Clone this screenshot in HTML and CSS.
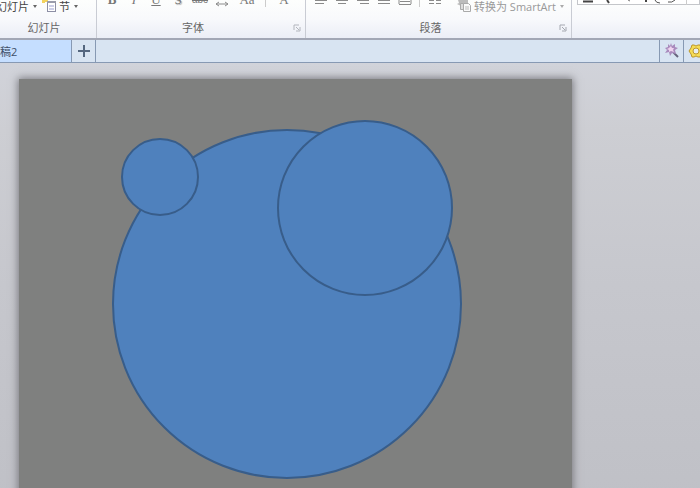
FILE: index.html
```html
<!DOCTYPE html>
<html lang="zh-CN">
<head>
  <meta charset="UTF-8">
  <meta name="viewport" content="width=device-width, initial-scale=1.0">
  <title>演示文稿2</title>
  <link rel="stylesheet" href="styles.css">
</head>
<body>
  <header class="ribbon">
    <section class="group slides">
      <div class="tools">
        <button class="text-tool">幻灯片<span class="caret"></span></button>
        <button class="text-tool">
          <svg width="15" height="14" viewBox="0 0 15 14">
            <path d="M0 0h6v3H3v1H0z" fill="#f3d35e"/>
            <rect x="5.500" y="3.500" width="8" height="9" fill="#fff" stroke="#8d8fa5"/>
            <path d="M5 2h9v2H5z" fill="#9a9cac"/>
            <path d="M7 7h5M7 10h5" stroke="#9b9fd0"/>
          </svg>节<span class="caret"></span>
        </button>
      </div>
      <div class="label">幻灯片</div>
    </section>
    <section class="group font">
      <div class="tools">
        <button class="letter"><b>B</b></button>
        <button class="letter"><i>I</i></button>
        <button class="letter"><u>U</u></button>
        <button class="letter shadow">S</button>
        <button class="letter"><s>abc</s></button>
        <button class="letter" aria-label="字符间距">
          <svg width="14" height="6" viewBox="0 0 14 6"><path d="M1 3h12M4 1L1 3l3 2M10 1l3 2-3 2" fill="none" stroke="#8b8b8b"/></svg>
        </button>
        <button class="letter wide">Aa</button>
        <span class="divider"></span>
        <button class="letter wide">A</button>
      </div>
      <div class="label">字体
        <button class="launcher" aria-label="字体对话框"><svg width="8" height="8" viewBox="0 0 8 8"><path d="M1 6V1h5M3 3l3 3M7 3v4H3" fill="none" stroke="#b3b6bd"/></svg></button>
      </div>
    </section>
    <section class="group paragraph">
      <div class="tools">
        <button class="align" aria-label="左对齐"><svg width="14" height="4"><path d="M1 0.500h12M1 3.500h9" stroke="#8a8a8a"/></svg></button>
        <button class="align" aria-label="居中"><svg width="14" height="4"><path d="M1 0.500h12M3 3.500h8" stroke="#8a8a8a"/></svg></button>
        <button class="align" aria-label="右对齐"><svg width="14" height="4"><path d="M1 0.500h12M4 3.500h9" stroke="#8a8a8a"/></svg></button>
        <button class="align" aria-label="两端对齐"><svg width="14" height="4"><path d="M1 0.500h12M1 3.500h12" stroke="#8a8a8a"/></svg></button>
        <button class="align" aria-label="分散对齐"><svg width="14" height="5"><path d="M1 0v2M13 0v2M2 1.500h10M1 4.500h12M1 2v2M13 2v2" stroke="#8a8a8a"/></svg></button>
        <span class="divider"></span>
        <button class="align" aria-label="分栏"><svg width="14" height="4"><path d="M1 0.500h5M8 0.500h5M1 3.500h5M8 3.500h5" stroke="#8a8a8a"/></svg></button>
        <button class="text-tool smartart" disabled>
          <svg width="15" height="14" viewBox="0 0 15 14">
            <path d="M1 1h10v3H4v3L0 5l2-1z" fill="#bcbcbc"/>
            <path d="M3.500 4.500h6v6h-6z" fill="#ddd" stroke="#aaa"/>
            <path d="M6.500 4.500h5l2 2v6h-7z" fill="#fafafa" stroke="#aaa"/>
            <path d="M8 8h4M8 10h4" stroke="#bbb"/>
          </svg>转换为 SmartArt<span class="caret"></span>
        </button>
      </div>
      <div class="label">段落
        <button class="launcher" aria-label="段落对话框"><svg width="8" height="8" viewBox="0 0 8 8"><path d="M1 6V1h5M3 3l3 3M7 3v4H3" fill="none" stroke="#a5a8b0"/></svg></button>
      </div>
    </section>
    <section class="group drawing">
      <div class="gallery">
        <svg width="100%" height="5">
          <path d="M5 1.500h10" stroke="#444" stroke-width="2"/>
          <path d="M29 0l2 3" stroke="#444" stroke-width="2"/>
          <path d="M50 0l2 1" stroke="#777"/>
          <path d="M68 0v2" stroke="#444" stroke-width="2"/>
          <path d="M77 0q1 3 5 3M90 2q4 1 7-2" fill="none" stroke="#555"/>
          <path d="M108.500 0v5" stroke="#ccc"/>
        </svg>
      </div>
    </section>
  </header>

  <nav class="tabs">
    <a class="tab active" href="#">稿2</a>
    <button class="tab add" aria-label="新建">
      <svg width="12" height="12" viewBox="0 0 12 12"><path d="M6 0v12M0 6h12" stroke="#55677f" stroke-width="2"/></svg>
    </button>
    <span class="fill"></span>
    <button class="tab icon" aria-label="魔棒">
      <svg width="16" height="16" viewBox="0 0 16 16">
        <path d="M9 9l5 5" stroke="#66647c" stroke-width="2"/>
        <path d="M7 0l1 3 3-2v3l3 1-3 2 1 4-4-1-2 3-1-4-4 1 2-3-2-2 3-1V1l2 2z" fill="#a98bbd"/>
        <path d="M7 3l1 2 2 0-1 2 1 2-3-1-2 1 0-2-2-1 2-1z" fill="#efd3ef"/>
      </svg>
    </button>
    <button class="tab icon" aria-label="设置">
      <svg width="16" height="14" viewBox="0 0 16 14">
        <path d="M4 1h2l2 1 2-1h2l1 3 2 3-2 3-1 3h-2l-2-1-2 1H4l-1-3-2-3 2-3z" fill="#f6dc55" stroke="#bc982c"/>
        <circle cx="8" cy="7" r="3" fill="#e8edf0" stroke="#bc982c"/>
      </svg>
    </button>
  </nav>

  <main class="workspace">
    <div class="slide">
      <svg class="shapes" viewBox="0 0 553 430" role="img" aria-label="三个圆形">
        <circle cx="268" cy="225" r="174"/>
        <circle cx="141" cy="98" r="38"/>
        <circle cx="346" cy="129" r="87"/>
      </svg>
    </div>
  </main>
</body>
</html>
```

FILE: styles.css
```css
* {
  box-sizing: border-box;
}
body {
  margin: 0;
  height: 100vh;
  overflow: hidden;
  display: flex;
  flex-direction: column;
  font-family: "Open Sans", "Noto Sans CJK SC", sans-serif;
  font-size: 11px;
  color: #444;
}
button {
  border: 0;
  padding: 0;
  background: none;
  font: inherit;
  color: inherit;
}
svg {
  display: block;
  flex-shrink: 0;
}
.ribbon {
  display: flex;
  flex-shrink: 0;
  height: 40px;
  background: linear-gradient(#fdfefd, #f8f9fc 50%, #ebeef6);
  border-bottom: 2px solid #a2a7b5;
}
.group {
  display: flex;
  flex-direction: column;
  flex-shrink: 0;
  border-right: 1px solid #c9ccd4;
}
.slides {
  width: 97px;
}
.font {
  width: 209px;
}
.paragraph {
  width: 266px;
}
.drawing {
  flex: 1;
  border-right: 0;
  padding-left: 5px;
}
.tools {
  display: flex;
  height: 14px;
}
.slides .tools {
  gap: 5px;
  margin-left: -4px;
}
.text-tool {
  display: flex;
  align-items: center;
  height: 12px;
  gap: 2px;
  white-space: nowrap;
}
.caret {
  margin-left: 2px;
  border: 2px solid transparent;
  border-top: 3px solid #666;
  border-bottom: 0;
}
.font .tools {
  align-items: flex-end;
  padding: 0 4px 7px;
}
.letter {
  display: flex;
  justify-content: center;
  width: 22px;
  line-height: 14px;
  font-family: "Liberation Serif", serif;
  font-size: 13px;
  color: #777;
}
.letter s {
  font-family: "Liberation Sans", sans-serif;
  font-size: 10px;
}
.shadow {
  text-shadow: 1px 1px 1px #aaa;
}
.wide {
  width: 28px;
}
.divider {
  width: 1px;
  height: 7px;
  background: #ccc;
}
.font .divider {
  margin: 0 4px;
}
.paragraph .tools {
  padding-left: 4px;
}
.align {
  display: flex;
  justify-content: center;
  width: 21px;
  height: 5px;
}
.paragraph .align + .divider {
  margin: 0 4px;
}
.smartart {
  margin-left: 12px;
  color: #999;
}
.smartart .caret {
  border-top-color: #aaa;
}
.label {
  position: relative;
  text-align: center;
  line-height: 28px;
  height: 24px;
  padding-right: 16px;
  color: #666;
}
.slides .label {
  padding-right: 8px;
}
.launcher {
  position: absolute;
  right: 4px;
  bottom: 6px;
}
.gallery {
  height: 5px;
  border: 1px solid #c4c6ca;
  border-top: 0;
  background: #fff;
}
.tabs {
  display: flex;
  flex-shrink: 0;
  height: 23px;
  background: #d8e4f2;
  border-bottom: 1px solid #8799b3;
}
.tab {
  display: flex;
  align-items: center;
  justify-content: center;
  width: 24px;
  border-right: 1px solid #8799b3;
}
.tab.active {
  width: 72px;
  justify-content: flex-start;
  background: #c5deff;
  color: #3f4f68;
  text-decoration: none;
}
.fill {
  flex: 1;
  border-right: 1px solid #8799b3;
}
.tab.icon:last-child {
  width: 16px;
  justify-content: flex-start;
  padding-left: 4px;
  border-right: 0;
  overflow: hidden;
}
.workspace {
  flex: 1;
  display: flex;
  padding: 16px 128px 0 19px;
  background: linear-gradient(#d1d3da, #cdced3 15%, #c6c7cd 50%, #bfc0c6);
}
.slide {
  flex: 1;
  background: #7f807f;
  box-shadow: 0 0 8px 1px #77777d;
}
.shapes {
  width: 100%;
}
.shapes circle {
  fill: #4f81bd;
  stroke: #385d8a;
  stroke-width: 2;
}
```
